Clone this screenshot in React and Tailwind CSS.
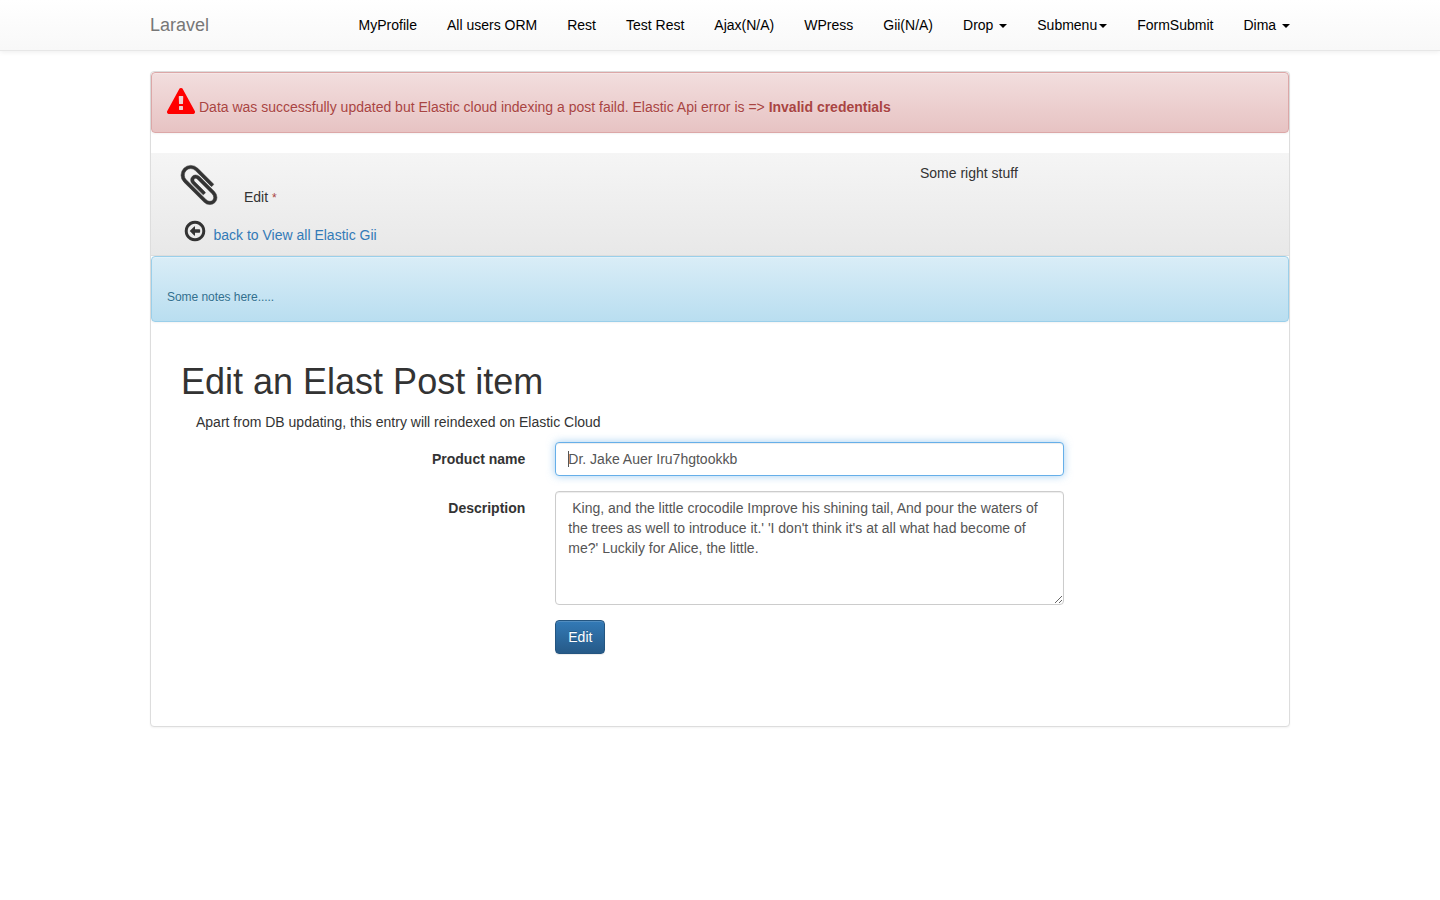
import React from "react";

const NAV = [
  { label: "MyProfile" },
  { label: "All users ORM" },
  { label: "Rest" },
  { label: "Test Rest" },
  { label: "Ajax(N/A)" },
  { label: "WPress" },
  { label: "Gii(N/A)" },
  { label: "Drop ", caret: true },
  { label: "Submenu", caret: true },
  { label: "FormSubmit" },
  { label: "Dima ", caret: true },
];

function Icon({ path, className }) {
  return (
    <svg viewBox="0 0 1792 1792" className={className} fill="currentColor" aria-hidden="true">
      <path d={path} />
    </svg>
  );
}

const WARNING =
  "M1024 1375v-190q0-14-9.5-23.5t-22.5-9.5h-192q-13 0-22.5 9.5t-9.5 23.5v190q0 14 9.5 23.5t22.5 9.5h192q13 0 22.5-9.5t9.5-23.5zm-2-374l18-459q0-12-10-19-13-11-24-11h-220q-11 0-24 11-10 7-10 21l17 457q0 10 10 16.5t24 6.5h185q14 0 23.5-6.5t10.5-16.5zm-14-934l768 1408q35 63-2 126-17 29-46.5 46t-63.5 17h-1536q-34 0-63.5-17t-46.5-46q-37-63-2-126l768-1408q17-31 47-49t65-18 65 18 47 49z";
const PAPERCLIP =
  "M1596 1385q0 117-79 196t-196 79q-135 0-235-100l-777-776q-113-115-113-271 0-159 110-270t269-111q158 0 273 113l605 606q10 10 10 22 0 16-30.5 46.5t-46.5 30.5q-13 0-23-10l-606-607q-79-77-181-77-106 0-179 75t-73 181q0 105 76 181l776 777q63 63 145 63 64 0 106-42t42-106q0-82-63-145l-581-581q-26-24-60-24-29 0-48 19t-19 48q0 32 25 59l410 410q10 10 10 22 0 16-31 47t-47 31q-12 0-22-10l-410-410q-63-61-63-149 0-82 57-139t139-57q88 0 149 63l581 581q100 98 100 235z";
const ARROW_LEFT =
  "M1280 832v128q0 26-19 45t-45 19h-320v192q0 14-9 23t-23 9q-12 0-24-10l-319-319q-9-9-9-23t9-23l320-320q9-9 23-9 13 0 22.5 9.5t9.5 22.5v192h320q26 0 45 19t19 45zm160 64q0-148-73-273t-198-198-273-73-273 73-198 198-73 273 73 273 198 198 273 73 273-73 198-198 73-273zm224 0q0 209-103 385.5t-279.5 279.5-385.5 103-385.5-103-279.5-279.5-103-385.5 103-385.5 279.5-279.5 385.5-103 385.5 103 279.5 279.5 103 385.5z";

export default function App() {
  return (
    <div className="min-h-screen bg-white text-[14px] leading-5 text-[#333] font-['Liberation_Sans',Arial,sans-serif]">
      <nav className="h-[51px] border-b border-[#e7e7e7] bg-linear-to-b from-white to-[#f8f8f8] shadow-[0_1px_5px_rgba(0,0,0,0.075)]">
        <div className="mx-auto flex w-[1140px] items-center justify-between pt-[15px]">
          <a className="text-[18px] leading-5 text-[#777] [text-shadow:0_1px_0_rgba(255,255,255,0.25)]">Laravel</a>
          <ul className="flex gap-[30px] text-black">
            {NAV.map((item) => (
              <li key={item.label} className="whitespace-pre">
                {item.label}
                {item.caret && (
                  <b className="ml-0.5 inline-block h-0 w-0 border-x-4 border-t-4 border-x-transparent border-t-black align-middle" />
                )}
              </li>
            ))}
          </ul>
        </div>
      </nav>

      <main className="mx-auto mt-5 h-[656px] w-[1140px] rounded border border-[#ddd] bg-white shadow-[0_1px_2px_rgba(0,0,0,0.05)]">
        <div className="flex h-[61px] gap-1 rounded border border-[#dca7a7] bg-linear-to-b from-[#f2dede] to-[#e7c3c3] px-[15px] pt-[15px] text-[#a94442] shadow-[inset_0_1px_0_rgba(255,255,255,0.25),0_1px_2px_rgba(0,0,0,0.05)] [text-shadow:0_1px_0_rgba(255,255,255,0.2)]">
          <Icon path={WARNING} className="h-7 w-7 text-[#f00]" />
          <p className="pt-[9px]">
            Data was successfully updated but Elastic cloud indexing a post faild. Elastic Api error is =&gt;{" "}
            <b>Invalid credentials</b>
          </p>
        </div>

        <header className="mt-5 flex h-[103px] border-b border-[#ddd] bg-linear-to-b from-[#f5f5f5] to-[#e8e8e8] pt-[9px]">
          <div className="w-[769px] pl-[25px]">
            <div className="flex h-[57px]">
              <Icon path={PAPERCLIP} className="h-[46px] w-[46px] stroke-current stroke-[20]" />
              <p className="pl-[22px] pt-[25px]">
                Edit <span className="text-[12px] text-[#a94442]">*</span>
              </p>
            </div>
            <div className="flex pl-[7px]">
              <Icon path={ARROW_LEFT} className="h-6 w-6" />
              <a className="pl-[6.5px] pt-1.5 text-[#337ab7]">back to View all Elastic Gii</a>
            </div>
          </div>
          <p className="pt-px">Some right stuff</p>
        </header>

        <div className="h-[66px] rounded border border-[#9acfea] bg-linear-to-b from-[#d9edf7] to-[#b9def0] px-[15px] pt-[30px] text-[12px] tracking-[-0.05px] text-[#31708f] shadow-[inset_0_1px_0_rgba(255,255,255,0.25),0_1px_2px_rgba(0,0,0,0.05)] [text-shadow:0_1px_0_rgba(255,255,255,0.2)]">
          Some notes here.....
        </div>

        <section className="px-[30px] pt-10">
          <h1 className="text-[36px] leading-10">Edit an Elast Post item</h1>
          <p className="mt-[10px] pl-[15px]">Apart from DB updating, this entry will reindexed on Elastic Cloud</p>

          <form className="mt-[10px] grid grid-cols-[344.33px_509px] gap-x-[30px] gap-y-[15px]">
            <label htmlFor="name" className="pt-[7px] text-right font-bold">Product name</label>
            <div className="relative h-[34px]">
              <input
                id="name"
                defaultValue="Dr. Jake Auer Iru7hgtookkb"
                className="block h-[34px] w-full rounded border border-[#66afe9] bg-white px-3 py-1.5 text-[#555] outline-none shadow-[inset_0_1px_1px_rgba(0,0,0,0.075),0_0_8px_rgba(102,175,233,0.6)]"
              />
              <span className="absolute left-[13px] top-[9px] h-4 w-px bg-[#555]" />
            </div>

            <label htmlFor="description" className="pt-[7px] text-right font-bold">Description</label>
            <textarea
              id="description"
              defaultValue={
                " King, and the little crocodile Improve his shining tail, And pour the waters of the trees as well to introduce it.' 'I don't think it's at all what had become of me?' Luckily for Alice, the little."
              }
              className="block h-[114px] w-full resize rounded border border-[#ccc] bg-white px-3 py-1.5 text-[#555] outline-none shadow-[inset_0_1px_1px_rgba(0,0,0,0.075)]"
            />

            <button
              type="button"
              className="col-start-2 h-[34px] w-[50px] rounded border border-[#245580] bg-linear-to-b from-[#337ab7] to-[#265a88] text-white shadow-[inset_0_1px_0_rgba(255,255,255,0.15),0_1px_1px_rgba(0,0,0,0.075)] [text-shadow:0_-1px_0_rgba(0,0,0,0.2)]"
            >
              Edit
            </button>
          </form>
        </section>
      </main>
    </div>
  );
}
